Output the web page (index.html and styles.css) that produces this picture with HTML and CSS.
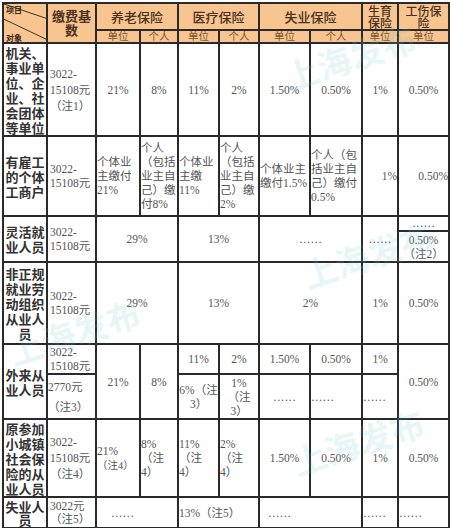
FILE: index.html
```html
<!DOCTYPE html>
<html>
<head>
<meta charset="utf-8">
<link rel="stylesheet" href="styles.css">
</head>
<body>
<div class="wrap">
<table class="tbl">
<colgroup>
<col class="c1"><col class="c2"><col class="c3"><col class="c4"><col class="c5"><col class="c6"><col class="c7"><col class="c8"><col class="c9"><col class="c10">
</colgroup>
<thead>
<tr class="h1">
<th rowspan="2" class="diag">
<svg class="diag-lines" viewBox="0 0 44 40" preserveAspectRatio="none"><line x1="0" y1="0" x2="44" y2="15" /><line x1="0" y1="16" x2="44" y2="37" /></svg>
<span class="d-top">项目</span><span class="d-bot">对象</span>
</th>
<th rowspan="2" class="hbase">缴费基数</th>
<th colspan="2">养老保险</th>
<th colspan="2">医疗保险</th>
<th colspan="2">失业保险</th>
<th class="two">生育<br>保险</th>
<th class="two">工伤保<br>险</th>
</tr>
<tr class="h2">
<th>单位</th><th>个人</th><th>单位</th><th>个人</th><th>单位</th><th>个人</th><th>单位</th><th>单位</th>
</tr>
</thead>
<tbody>
<tr class="r1">
<th>机关、事业单位、企业、社会团体等单位</th>
<td class="l lh16">3022-<br>15108元<br><span class="nw">（注1）</span></td>
<td>21%</td><td>8%</td><td>11%</td><td>2%</td><td>1.50%</td><td>0.50%</td><td>1%</td><td>0.50%</td>
</tr>
<tr class="r2">
<th>有雇工的个体工商户</th>
<td class="l">3022-<br>15108元</td>
<td class="l">个体业主缴付21%</td>
<td class="l">个人（包括业主自己）缴付8%</td>
<td class="l">个体业主缴11%</td>
<td class="l">个人（包括业主自己）缴2%</td>
<td class="l">个体业主缴付1.5%</td>
<td class="l">个人（包括业主自己）缴付0.5%</td>
<td class="r">1%</td>
<td class="r">0.50%</td>
</tr>
<tr class="r3a">
<th rowspan="2">灵活就业人员</th>
<td rowspan="2" class="l">3022-<br>15108元</td>
<td rowspan="2" colspan="2">29%</td>
<td rowspan="2" colspan="2">13%</td>
<td rowspan="2" colspan="2">……</td>
<td rowspan="2">……</td>
<td class="top-dots">……</td>
</tr>
<tr class="r3b">
<td>0.50%<br><span class="nw">（注2）</span></td>
</tr>
<tr class="r4">
<th>非正规就业劳动组织从业人员</th>
<td class="l">3022-<br>15108元</td>
<td colspan="2">29%</td>
<td colspan="2">13%</td>
<td colspan="2">2%</td>
<td>1%</td>
<td>0.50%</td>
</tr>
<tr class="r5a">
<th rowspan="2">外来从业人员</th>
<td class="l">3022-<br>15108元</td>
<td rowspan="2">21%</td>
<td rowspan="2">8%</td>
<td>11%</td><td>2%</td><td>1.50%</td><td>0.50%</td><td>1%</td>
<td rowspan="2">0.50%</td>
</tr>
<tr class="r5b">
<td class="l lh20">2770元<br><span class="nw">（注3）</span></td>
<td><span class="nw">6%（注</span><br>3）</td>
<td>1%<br>（注<br>3）</td>
<td>……</td>
<td class="l">……</td>
<td class="l">……</td>
</tr>
<tr class="r6">
<th>原参加小城镇社会保险的从业人员</th>
<td class="l lh16">3022-<br>15108元<br><span class="nw">（注4）</span></td>
<td class="l">21%<br><span class="nw small">（注4）</span></td>
<td class="l">8%<br>（注<br>4）</td>
<td class="l">11%<br>（注<br>4）</td>
<td class="l">2%<br>（注<br>4）</td>
<td>1.50%</td><td>0.50%</td><td>1%</td><td>0.50%</td>
</tr>
<tr class="r7">
<th>失业人员</th>
<td class="l lh13">3022元<br><span class="nw">（注5）</span></td>
<td colspan="2" class="l pad14">……</td>
<td colspan="2" class="l">13%（注5）</td>
<td colspan="2" class="l pad8">……</td>
<td class="l">……</td>
<td class="l">……</td>
</tr>
</tbody>
</table>
<span class="wm wm1">上海发布</span>
<span class="wm wm2">上海发布</span>
<span class="wm wm3">上海发布</span>
<span class="wm wm4">上海发布</span>
</div>
</body>
</html>
```

FILE: styles.css
```css
html, body {
  margin: 0;
  padding: 0;
  background: #fff;
}

.wrap {
  position: relative;
  width: 450px;
  height: 528px;
  padding: 2px 0 0 2px;
  box-sizing: border-box;
  overflow: hidden;
}

.tbl {
  border-collapse: collapse;
  table-layout: fixed;
  width: 447px;
  font-family: "Liberation Serif", "Noto Sans CJK SC", serif;
  font-size: 11.5px;
  color: #555;
}

.c1 { width: 44px; }
.c2 { width: 49px; }
.c3 { width: 44px; }
.c4 { width: 38px; }
.c5 { width: 41px; }
.c6 { width: 40px; }
.c7 { width: 51px; }
.c8 { width: 52px; }
.c9 { width: 36px; }
.c10 { width: 51px; }

.tbl th,
.tbl td {
  border: 2px solid #2a2a2a;
  padding: 0;
  line-height: 14px;
  text-align: center;
  vertical-align: middle;
  overflow: hidden;
}

.nw { white-space: nowrap; }
.small { font-size: 10.5px; }

/* header */
.tbl thead th {
  background: #f8c48f;
  font-family: "Noto Sans CJK SC", sans-serif;
  font-weight: 500;
  font-size: 13px;
  line-height: 13px;
  color: #4a3120;
  overflow: visible;
}

.tbl thead th.two {
  font-size: 12px;
  line-height: 12px;
}

.h1 { height: 27px; }
.h2 { height: 13px; }

.tbl .h2 th {
  font-size: 10.5px;
  line-height: 10.5px;
  font-weight: 400;
  color: #7a5634;
}

.tbl thead th.hbase {
  font-weight: 700;
  line-height: 14px;
  color: #4a3120;
}

.tbl thead th.diag {
  position: relative;
  padding: 0;
  overflow: hidden;
}

.diag-lines {
  position: absolute;
  left: 0;
  top: 0;
  width: 100%;
  height: 100%;
}

.diag-lines line {
  stroke: #3a2a1a;
  stroke-width: 1;
}

.d-top,
.d-bot {
  position: absolute;
  left: 2px;
  font-size: 8px;
  line-height: 9px;
  font-weight: 700;
  color: #3a2818;
}

.d-top { top: 1px; }
.d-bot { bottom: 0; }

/* body labels */
.tbl tbody th {
  font-family: "Noto Sans CJK SC", sans-serif;
  font-weight: 700;
  font-size: 13px;
  line-height: 15px;
  color: #333;
  background: #fff;
  padding: 0;
}

.tbl .r7 th { line-height: 13px; }

.tbl td.l { text-align: left; }
.tbl td.r { text-align: right; }
.tbl td.lh16 { line-height: 16px; }
.tbl td.lh20 { line-height: 20px; }
.tbl td.lh13 { line-height: 13px; }
.tbl td.pad14 { padding-left: 14px; }
.tbl td.pad8 { padding-left: 8px; }

.tbl td.l:nth-child(2) { padding-left: 2px; }

.r1 { height: 93px; }
.r2 { height: 80px; }
.r3a { height: 15px; }
.r3b { height: 31px; }
.r4 { height: 82px; }
.r5a { height: 30px; }
.r5b { height: 45px; }
.r6 { height: 78px; }
.r7 { height: 31px; }

.tbl td.top-dots {
  line-height: 11px;
}

/* watermark */
.wm {
  position: absolute;
  font-family: "Noto Sans CJK SC", sans-serif;
  font-weight: 700;
  font-size: 34px;
  line-height: 34px;
  color: rgba(110, 200, 205, 0.18);
  transform: rotate(-18deg);
  white-space: nowrap;
  pointer-events: none;
}

.wm1 { left: 282px; top: 40px; }
.wm2 { left: 300px; top: 238px; }
.wm3 { left: 6px; top: 315px; }
.wm4 { left: 290px; top: 425px; }
```
